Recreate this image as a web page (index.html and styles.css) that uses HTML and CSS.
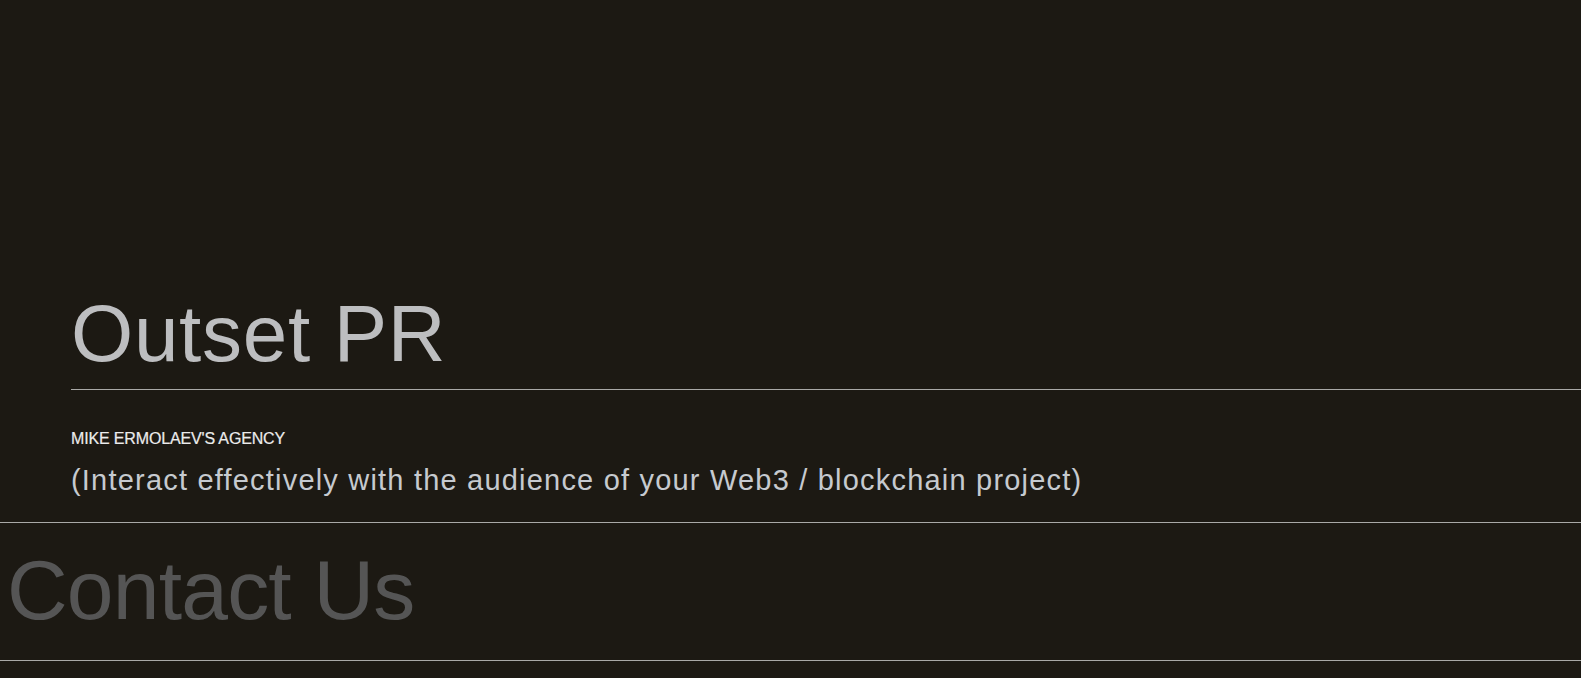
FILE: index.html
```html
<!DOCTYPE html>
<html lang="en">

<head>
  <meta charset="UTF-8">
  <meta name="viewport" content="width=device-width, initial-scale=1.0">
  <title>Outset PR</title>
  <link rel="stylesheet" href="styles.css">
</head>

<body>
  <header class="hero">
    <h1 class="hero-title">Outset PR</h1>
    <div class="hero-body">
      <p class="hero-kicker">MIKE ERMOLAEV'S AGENCY</p>
      <p class="hero-tagline">(Interact effectively with the audience of your Web3 / blockchain project)</p>
    </div>
  </header>

  <section class="contact">
    <h2 class="contact-title">Contact Us</h2>
  </section>
</body>

</html>
```

FILE: styles.css
```css
body {
  font-family: "Liberation Sans", Arial, sans-serif;
  margin: 0;
  padding: 0;
  background-color: #1c1913;
  overflow: hidden;
}

.hero {
  padding-top: 294px;
  padding-left: 71px;
  border-bottom: 1px solid #a9a9a7;
}

.hero-title {
  margin: 0;
  padding-bottom: 15px;
  font-size: 80px;
  font-weight: 400;
  line-height: 1;
  letter-spacing: 0.7px;
  color: #bdbec0;
  border-bottom: 1px solid #a9a9a7;
}

.hero-body {
  padding-top: 39px;
  padding-bottom: 24px;
}

.hero-kicker {
  margin: 0 0 15px;
  font-size: 16px;
  line-height: 1.2;
  letter-spacing: -0.15px;
  color: #ececec;
  -webkit-text-stroke: 0.2px #ececec;
}

.hero-tagline {
  margin: 0;
  font-size: 29px;
  line-height: 1.2;
  letter-spacing: 1.2px;
  color: #c6cacf;
}

.contact {
  padding: 25px 7px 28px;
  border-bottom: 1px solid #a9a9a7;
}

.contact-title {
  margin: 0;
  font-size: 84px;
  font-weight: 400;
  line-height: 1;
  letter-spacing: -0.8px;
  color: #555555;
}
```
